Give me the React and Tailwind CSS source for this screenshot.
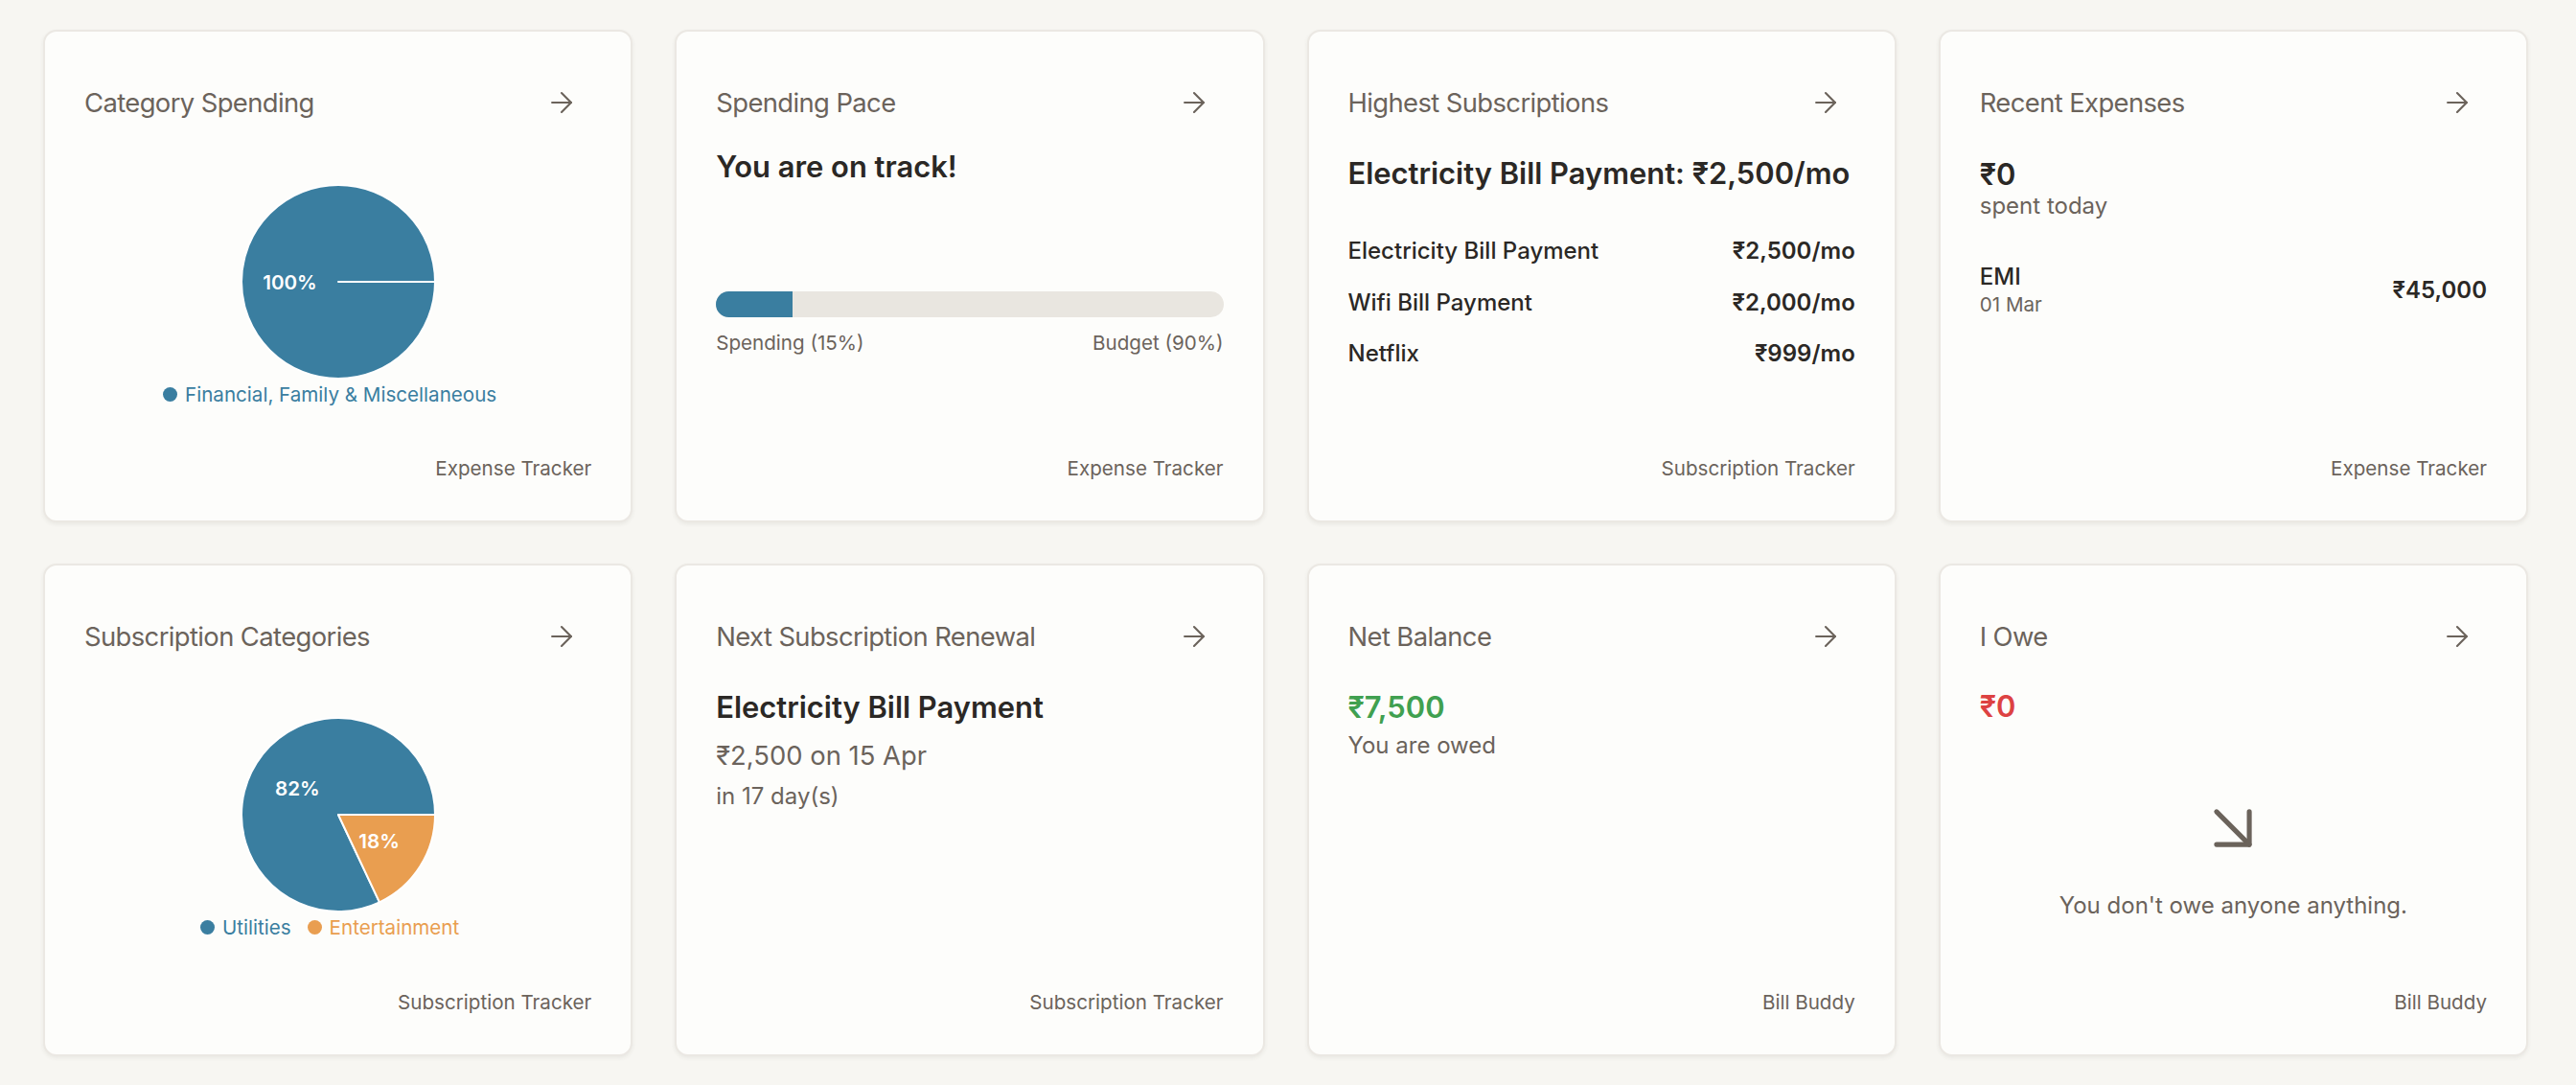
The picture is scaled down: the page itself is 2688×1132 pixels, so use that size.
import React from 'react'
import { ArrowRight, ArrowDownRight } from 'lucide-react'

const BLUE = '#3a7ea0'
const ORANGE = '#e99e50'

// point on the circle, angle in degrees, counter-clockwise from 3 o'clock
const polar = (cx, cy, r, deg) => {
  const a = (deg * Math.PI) / 180
  return [cx + r * Math.cos(a), cy - r * Math.sin(a)]
}

const Pie = ({ slices }) => {
  const cx = 102
  const cy = 102
  const r = 101
  const total = slices.reduce((sum, s) => sum + s.value, 0)
  let start = 0

  return (
    <svg width="204" height="204" viewBox="0 0 204 204">
      {slices.map((s) => {
        const sweep = (s.value / total) * 360
        const end = start + sweep
        const mid = start + sweep / 2
        const [sx, sy] = polar(cx, cy, r, start)
        const [ex, ey] = polar(cx, cy, r, end)
        const [lx, ly] = polar(cx, cy, r * 0.5, mid)
        const d =
          sweep >= 360
            ? `M${cx},${cy} L${cx + r},${cy} A${r},${r} 0 1 0 ${cx - r},${cy} A${r},${r} 0 1 0 ${cx + r},${cy} Z`
            : `M${cx},${cy} L${sx},${sy} A${r},${r} 0 ${sweep > 180 ? 1 : 0} 0 ${ex},${ey} Z`
        start = end
        return (
          <g key={s.name}>
            <path d={d} fill={s.color} stroke="#ffffff" strokeWidth="2" strokeLinejoin="round" />
            <text
              x={lx}
              y={ly}
              fill="#ffffff"
              textAnchor="middle"
              dominantBaseline="central"
              fontSize="20.6"
              fontWeight="600"
              fontFamily="Inter, sans-serif"
            >
              {Math.round((s.value / total) * 100)}%
            </text>
          </g>
        )
      })}
    </svg>
  )
}

const Legend = ({ items }) => (
  <div className="mt-[2px] flex justify-center text-[20.6px] leading-[27px]">
    {items.map((i) => (
      <div key={i.name} className="mr-[17px] flex items-center gap-[8px]">
        <span className={`h-[15px] w-[15px] rounded-full ${i.dot}`} />
        <span className={i.text}>{i.name}</span>
      </div>
    ))}
  </div>
)

const Card = ({ title, footer, children }) => (
  <div className="flex h-[514px] flex-col rounded-[14px] border-2 border-[#ebe8e3] bg-[#fdfdfb] px-[41px] pt-[43px] pb-[41px] shadow-[0_2px_4px_rgba(60,50,40,0.07)]">
    <div className="flex h-[62px] shrink-0 items-center justify-between">
      <h3 className="text-[27.4px] leading-[40px] tracking-[-0.022em] text-[#6b635b]">{title}</h3>
      <button className="p-[14px] text-[#6b635b]">
        <ArrowRight size={34} strokeWidth={1.5} />
      </button>
    </div>
    <div className="min-h-0 flex-1">{children}</div>
    <p className="text-right text-[20.6px] leading-[27px] text-[#6b635b]">{footer}</p>
  </div>
)

const subscriptions = [
  { name: 'Electricity Bill Payment', amount: '₹2,500/mo' },
  { name: 'Wifi Bill Payment', amount: '₹2,000/mo' },
  { name: 'Netflix', amount: '₹999/mo' },
]

const App = () => {
  return (
    <div className="min-h-screen bg-[#f7f6f2] font-['Inter','Noto_Sans',sans-serif] text-[#2b2825]">
      <div className="grid grid-cols-4 gap-x-[44px] gap-y-[43px] pt-[31px] pr-[50px] pb-[29px] pl-[45px]">
        <Card title="Category Spending" footer="Expense Tracker">
          <div className="flex flex-col items-center">
            <div className="mt-[54px]">
              <Pie slices={[{ name: 'Financial, Family & Miscellaneous', value: 100, color: BLUE }]} />
            </div>
            <Legend
              items={[
                { name: 'Financial, Family & Miscellaneous', dot: 'bg-[#3a7ea0]', text: 'text-[#3a7ea0]' },
              ]}
            />
          </div>
        </Card>

        <Card title="Spending Pace" footer="Expense Tracker">
          <p className="mt-[16px] text-[30.9px] leading-[40px] font-semibold">You are on track!</p>
          <div className="mt-[110px] h-[27px] overflow-hidden rounded-full bg-[#e9e6e0]">
            <div className="h-full w-[15%] bg-[#3a7ea0]" />
          </div>
          <div className="mt-[13px] flex justify-between text-[20.6px] leading-[27px] text-[#6b635b]">
            <span>Spending (15%)</span>
            <span>Budget (90%)</span>
          </div>
        </Card>

        <Card title="Highest Subscriptions" footer="Subscription Tracker">
          <p className="mt-[23px] text-[30.9px] leading-[40px] font-semibold">
            Electricity Bill Payment: ₹2,500/mo
          </p>
          <ul className="mt-[46px] flex flex-col gap-[23.6px]">
            {subscriptions.map((s) => (
              <li key={s.name} className="flex justify-between text-[24px] leading-[30px]">
                <span className="font-medium">{s.name}</span>
                <span className="font-semibold">{s.amount}</span>
              </li>
            ))}
          </ul>
        </Card>

        <Card title="Recent Expenses" footer="Expense Tracker">
          <p className="mt-[24px] text-[30.9px] leading-[40px] font-semibold">₹0</p>
          <p className="text-[24px] leading-[26px] text-[#6b635b]">spent today</p>
          <div className="mt-[46px] flex items-center justify-between">
            <div>
              <p className="text-[24px] leading-[30px] font-medium">EMI</p>
              <p className="text-[20.6px] leading-[27px] text-[#6b635b]">01 Mar</p>
            </div>
            <p className="text-[24px] leading-[30px] font-semibold">₹45,000</p>
          </div>
        </Card>

        <Card title="Subscription Categories" footer="Subscription Tracker">
          <div className="flex flex-col items-center">
            <div className="mt-[53px]">
              <Pie
                slices={[
                  { name: 'Utilities', value: 82, color: BLUE },
                  { name: 'Entertainment', value: 18, color: ORANGE },
                ]}
              />
            </div>
            <Legend
              items={[
                { name: 'Utilities', dot: 'bg-[#3a7ea0]', text: 'text-[#3a7ea0]' },
                { name: 'Entertainment', dot: 'bg-[#e99e50]', text: 'text-[#e99e50]' },
              ]}
            />
          </div>
        </Card>

        <Card title="Next Subscription Renewal" footer="Subscription Tracker">
          <p className="mt-[23px] text-[30.9px] leading-[40px] font-semibold">Electricity Bill Payment</p>
          <p className="mt-[13px] text-[27.4px] leading-[34px] text-[#6b635b]">₹2,500 on 15 Apr</p>
          <p className="mt-[11px] text-[24px] leading-[30px] text-[#6b635b]">in 17 day(s)</p>
        </Card>

        <Card title="Net Balance" footer="Bill Buddy">
          <p className="mt-[23px] text-[30.9px] leading-[40px] font-semibold text-[#40a050]">₹7,500</p>
          <p className="mt-[5px] text-[24px] leading-[30px] text-[#6b635b]">You are owed</p>
        </Card>

        <Card title="I Owe" footer="Bill Buddy">
          <p className="mt-[22px] text-[30.9px] leading-[40px] font-semibold text-[#dd4242]">₹0</p>
          <div className="mt-[66px] flex flex-col items-center text-[#6b635b]">
            <ArrowDownRight size={82} strokeWidth={1.5} />
            <p className="mt-[23px] text-[24px] leading-[34px]">You don't owe anyone anything.</p>
          </div>
        </Card>
      </div>
    </div>
  )
}

export default App
